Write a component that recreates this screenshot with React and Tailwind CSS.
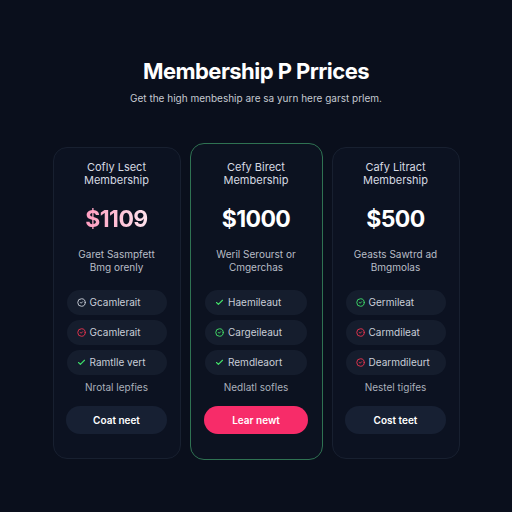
import { Check, CircleCheck } from 'lucide-react';

const plans = [
  {
    title: ['Cofly Lsect', 'Membership'],
    price: '$1109',
    priceClass: 'bg-gradient-to-r from-[#ff9cc0] to-[#ffe2ec] bg-clip-text text-transparent',
    desc: ['Garet Sasmpfett', 'Bmg orenly'],
    features: [
      { label: 'Gcamlerait', color: 'text-[#c9ced8]', icon: 'circle' },
      { label: 'Gcamlerait', color: 'text-[#e8334f]', icon: 'circle' },
      { label: 'Ramtlle vert', color: 'text-[#3ddc6a]', icon: 'check' },
    ],
    note: 'Nrotal lepfies',
    cta: 'Coat neet',
    featured: false,
  },
  {
    title: ['Cefy Birect', 'Membership'],
    price: '$1000',
    priceClass: 'text-white',
    desc: ['Weril Serourst or', 'Cmgerchas'],
    features: [
      { label: 'Haemileaut', color: 'text-[#44e06a]', icon: 'check' },
      { label: 'Cargeileaut', color: 'text-[#44e06a]', icon: 'circle' },
      { label: 'Remdleaort', color: 'text-[#44e06a]', icon: 'check' },
    ],
    note: 'Nedlatl sofles',
    cta: 'Lear newt',
    featured: true,
  },
  {
    title: ['Cafy Litract', 'Membership'],
    price: '$500',
    priceClass: 'text-white',
    desc: ['Geasts Sawtrd ad', 'Bmgmolas'],
    features: [
      { label: 'Germileat', color: 'text-[#3ddc6a]', icon: 'circle' },
      { label: 'Carmdileat', color: 'text-[#e8334f]', icon: 'circle' },
      { label: 'Dearmdileurt', color: 'text-[#e8334f]', icon: 'circle' },
    ],
    note: 'Nestel tigifes',
    cta: 'Cost teet',
    featured: false,
  },
];

function PlanCard({ plan }) {
  const { featured } = plan;
  return (
    <div
      className={
        featured
          ? 'w-[133px] -mt-1 -mb-px rounded-[14px] border border-[#2f7252] bg-[#0c1220] pt-[17px] pb-[24px] flex flex-col items-center'
          : 'w-[128px] rounded-[14px] border border-[#182030] bg-[#0c1221] pt-[13px] pb-[24px] flex flex-col items-center'
      }
    >
      <div className="text-center text-[11px] leading-[13px] text-[#d6dae2]">
        <div>{plan.title[0]}</div>
        <div>{plan.title[1]}</div>
      </div>
      <div className={`mt-[19px] text-[23px] leading-[26px] font-bold tracking-tight ${plan.priceClass}`}>
        {plan.price}
      </div>
      <div className="mt-[16px] text-center text-[10px] leading-[13px] text-[#b8bdc7]">
        <div>{plan.desc[0]}</div>
        <div>{plan.desc[1]}</div>
      </div>
      <div className="mt-[16px] flex flex-col gap-[5px]">
        {plan.features.map((f, i) => (
          <div
            key={i}
            className={`${featured ? 'w-[102px]' : 'w-[100px]'} h-[25px] rounded-full bg-[#151d2d] flex items-center pl-[10px] gap-[4px] text-[10px] text-[#c9ced8]`}
          >
            {f.icon === 'check' ? (
              <Check size={9} strokeWidth={3} className={f.color} />
            ) : (
              <CircleCheck size={9} strokeWidth={2.5} className={f.color} />
            )}
            <span>{f.label}</span>
          </div>
        ))}
      </div>
      <div className="mt-[5px] text-[10px] leading-[14px] text-[#aab0bb]">{plan.note}</div>
      <button
        className={
          featured
            ? 'mt-[12px] w-[104px] h-[28px] rounded-full bg-[#f72c69] text-white text-[10px] font-semibold'
            : 'mt-[12px] w-[101px] h-[28px] rounded-full bg-[#172033] text-white text-[10px] font-semibold'
        }
      >
        {plan.cta}
      </button>
    </div>
  );
}

export default function App() {
  return (
    <div
      className="w-[512px] h-[512px] bg-[#0a0f1c] flex flex-col items-center overflow-hidden"
      style={{ fontFamily: 'Inter, "Noto Sans", sans-serif' }}
    >
      <h1 className="mt-[58px] text-[22px] leading-[26px] font-bold text-white tracking-tight">
        Membership P Prrices
      </h1>
      <p className="mt-[8px] text-[10px] leading-[13px] text-[#c5c9d1]">
        Get the high menbeship are sa yurn here garst prlem.
      </p>
      <div className="mt-[42px] flex items-stretch gap-[9px]">
        {plans.map((p, i) => (
          <PlanCard key={i} plan={p} />
        ))}
      </div>
    </div>
  );
}
